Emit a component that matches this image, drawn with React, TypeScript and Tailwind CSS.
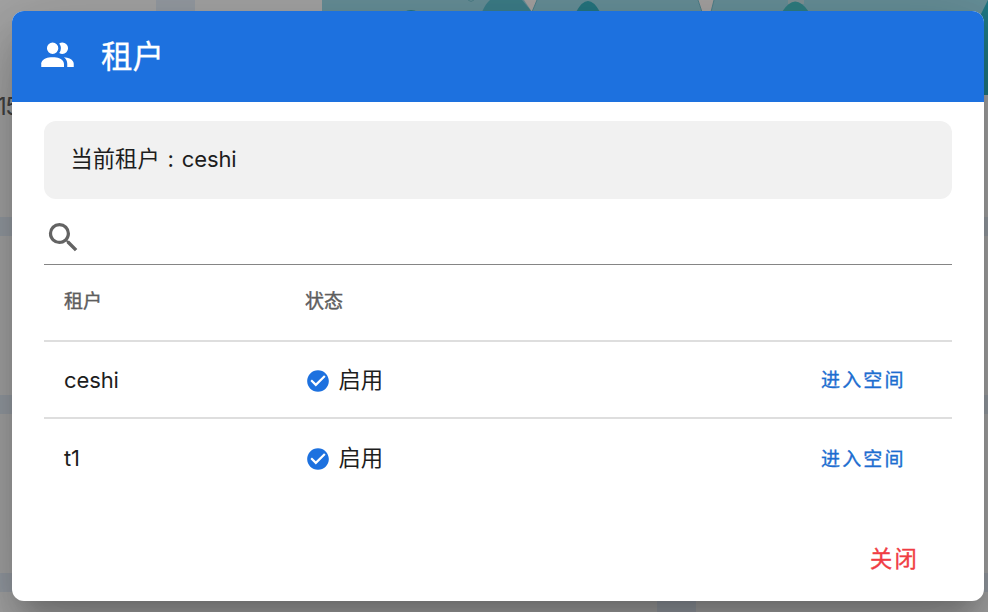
const tenants = [
  { name: "ceshi", status: "启用" },
  { name: "t1", status: "启用" },
];

const ICONS = {
  people:
    "M16 17v2H2v-2s0-4 7-4 7 4 7 4m-3.5-9.5A3.5 3.5 0 1 0 9 11a3.5 3.5 0 0 0 3.5-3.5m3.44 5.5A5.32 5.32 0 0 1 18 17v2h4v-2s0-3.63-6.06-4M15 4a3.39 3.39 0 0 0-1.93.59 5 5 0 0 1 0 5.82A3.39 3.39 0 0 0 15 11a3.5 3.5 0 0 0 0-7z",
  search:
    "M9.5 3A6.5 6.5 0 0 1 16 9.5c0 1.61-.59 3.09-1.56 4.23l.27.27h.79l5 5-1.5 1.5-5-5v-.79l-.27-.27A6.52 6.52 0 0 1 9.5 16 6.5 6.5 0 0 1 3 9.5 6.5 6.5 0 0 1 9.5 3m0 2C7 5 5 7 5 9.5S7 14 9.5 14 14 12 14 9.5 12 5 9.5 5z",
  check:
    "M12 2C6.5 2 2 6.5 2 12s4.5 10 10 10 10-4.5 10-10S17.5 2 12 2m-2 15-5-5 1.41-1.41L10 14.17l7.59-7.59L19 8l-9 9z",
};

function Icon({ path, className }: { path: string; className: string }) {
  return (
    <svg viewBox="0 0 24 24" fill="currentColor" className={`shrink-0 ${className}`}>
      <path d={path} />
    </svg>
  );
}

function Chart() {
  return (
    <svg className="ml-[127px] block h-[95px] w-[666px]" viewBox="322 0 666 95">
      <path d="M322 0H698L702 12H711L714 0H988V95H322Z" fill="#668f98" />
      <path d="M524 0H537L532 12Z" fill="#a5a2a1" />
      <path d="M698 0H714L711 12H702Z" fill="#a5a2a1" />
      <path d="M537 0L532 12M698 0L702 12M714 0L711 12" stroke="#4d7f89" fill="none" />
      <path d="M482 12Q486 3 490 0H522L532 12Z" fill="#3c7d88" />
      <path d="M404 12Q411 8 418 12ZM576 12Q588 -10 600 12Z" fill="#25757f" />
      <path d="M788 0H804V4H788Z" fill="#7f9296" />
      <path d="M782 12Q795 -9 809 12Z" fill="#2f7d80" />
      <path d="M468 0Q471 3 474 0" stroke="#4d7f89" fill="none" />
      <path d="M988 0L980 16V95H988Z" fill="#1f7883" />
    </svg>
  );
}

function Dashboard() {
  return (
    <div className="flex h-full flex-col gap-[19px] bg-[#959ba2]">
      <div className="flex h-[217px] shrink-0 gap-[39px]">
        <div className="w-[156px] bg-[#a4a4a4]">
          <div className="-ml-[3px] pt-[91px] text-[24px] leading-[32px] tracking-[-1.5px] text-[#414141]">15</div>
        </div>
        <div className="flex-1 bg-[#a4a4a4]">
          <Chart />
        </div>
      </div>
      <div className="h-[159px] shrink-0 bg-[#a4a4a4]" />
      <div className="h-[159px] shrink-0 bg-[#a4a4a4]" />
      <div className="flex flex-1 gap-[39px]">
        <div className="w-[657px] bg-[#a4a4a4]" />
        <div className="flex-1 bg-[#a4a4a4]" />
      </div>
    </div>
  );
}

export default function App() {
  return (
    <div className="relative h-[612px] w-[988px] overflow-hidden font-['Inter','Noto_Sans_CJK_SC',sans-serif] text-[22.3px] text-[#1d1d1d]">
      <Dashboard />
      <div
        role="dialog"
        className="absolute top-[11px] left-[12px] flex h-[590px] w-[972px] flex-col overflow-hidden rounded-[12px] bg-white shadow-[0_18px_24px_-11px_rgba(0,0,0,0.2),0_38px_61px_5px_rgba(0,0,0,0.14),0_14px_74px_13px_rgba(0,0,0,0.12)]"
      >
        <header className="flex h-[91px] shrink-0 items-center bg-[#1d71df] pl-[26px] text-white">
          <Icon path={ICONS.people} className="size-[39px] -translate-y-px" />
          <h1 className="ml-[24px] text-[31.5px] leading-[48px] [-webkit-text-stroke:0.3px_currentColor]">租户</h1>
        </header>

        <div className="mx-[32px] mt-[19px] flex h-[78px] shrink-0 items-center rounded-[12px] bg-[#f1f1f1] pb-[2px] pl-[26.5px]">
          <span>当前租户</span>
          <span className="w-[22px] text-center">:</span>
          <span className="text-[22px] tracking-[-0.1px]">ceshi</span>
        </div>

        <label className="mx-[32px] flex h-[66px] shrink-0 items-center border-b border-[#858585] pt-[11px]">
          <Icon path={ICONS.search} className="size-[39px] text-[#636363]" />
          <input className="min-w-0 flex-1 bg-transparent outline-none" />
        </label>

        <div className="mx-[32px] grid shrink-0 grid-cols-[261px_1fr_auto]">
          <div className="col-span-3 grid h-[77px] grid-cols-subgrid items-center border-b-2 border-[#dedede] px-[20px] text-[19px] text-[#5d5d5d] [-webkit-text-stroke:0.4px_currentColor]">
            <span>租户</span>
            <span>状态</span>
          </div>
          {tenants.map((t, i) => (
            <div
              key={t.name}
              className={`col-span-3 grid grid-cols-subgrid items-center px-[20px] ${i === 0 ? "h-[77px] border-b-2 border-[#dedede]" : "h-[78px]"}`}
            >
              <span className={`text-[22px] tracking-[-0.1px] ${i === 0 ? "pt-px" : ""}`}>{t.name}</span>
              <span className="flex items-center gap-[7.5px]">
                <Icon path={ICONS.check} className="size-[26px] translate-y-px text-[#1d71df]" />
                {t.status}
              </span>
              <button className="mr-[26.5px] pt-[4px] text-[19px] tracking-[2.1px] text-[#1c6dd0] [-webkit-text-stroke:0.35px_currentColor]">进入空间</button>
            </div>
          ))}
        </div>

        <footer className="mt-[44px] flex justify-end pr-[65px]">
          <button className="text-[22.3px] leading-[36px] tracking-[2.2px] text-[#f03c43] [-webkit-text-stroke:0.35px_currentColor]">关闭</button>
        </footer>
      </div>
    </div>
  );
}
